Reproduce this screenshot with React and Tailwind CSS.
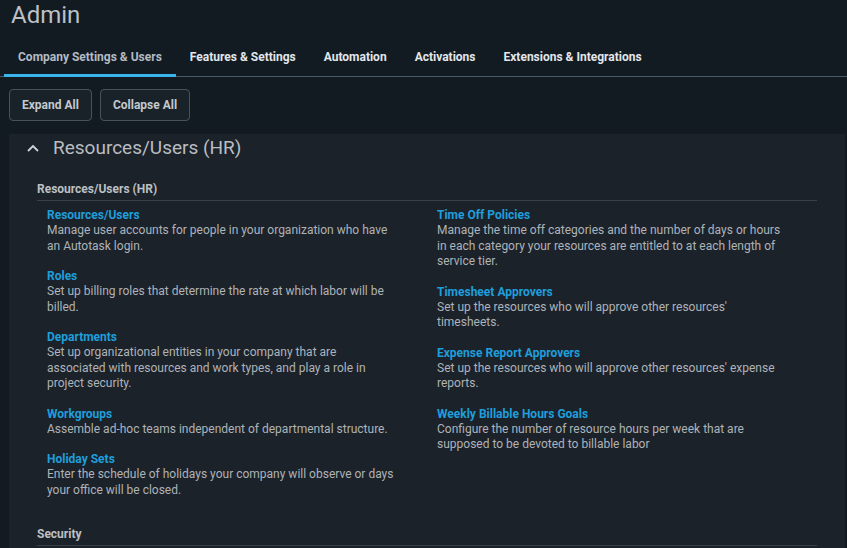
import React from "react";

const left = [
  { t: "Resources/Users", d: "Manage user accounts for people in your organization who have an Autotask login." },
  { t: "Roles", d: "Set up billing roles that determine the rate at which labor will be billed." },
  { t: "Departments", d: "Set up organizational entities in your company that are associated with resources and work types, and play a role in project security." },
  { t: "Workgroups", d: "Assemble ad-hoc teams independent of departmental structure." },
  { t: "Holiday Sets", d: "Enter the schedule of holidays your company will observe or days your office will be closed." },
];
const right = [
  { t: "Time Off Policies", d: "Manage the time off categories and the number of days or hours in each category your resources are entitled to at each length of service tier." },
  { t: "Timesheet Approvers", d: "Set up the resources who will approve other resources' timesheets." },
  { t: "Expense Report Approvers", d: "Set up the resources who will approve other resources' expense reports." },
  { t: "Weekly Billable Hours Goals", d: "Configure the number of resource hours per week that are supposed to be devoted to billable labor" },
];

function Item({ t, d }) {
  return (
    <div className="mb-[14px] w-[350px]">
      <div className="text-[12px] leading-[16px] font-bold text-[#1f9edb]">{t}</div>
      <div className="text-[12px] leading-[15.5px] text-[#aeb3b8]">{d}</div>
    </div>
  );
}

const tabs = ["Company Settings & Users", "Features & Settings", "Automation", "Activations", "Extensions & Integrations"];

export default function App() {
  return (
    <div
      className="w-[847px] h-[548px] overflow-hidden bg-[#121b22] flex flex-col"
      style={{ fontFamily: "Roboto, 'Liberation Sans', sans-serif" }}
    >
      <div className="h-[30px] pl-[11px] text-[24px] leading-[30px] text-[#bcc1c6]">Admin</div>
      <div className="mt-[15px] flex border-b border-[#4a5b67] pl-[4px]">
        {tabs.map((t, i) => (
          <div
            key={t}
            className={
              "px-[14px] pt-[4px] pb-[9px] text-[12px] leading-[16px] font-bold -mb-px border-b-[3px] " +
              (i === 0 ? "border-[#3bb3ec] text-[#b3bcc4]" : "border-transparent text-[#e2e7ec]")
            }
          >
            {t}
          </div>
        ))}
      </div>
      <div className="mt-[12px] ml-[9px] flex gap-[8px]">
        <button className="h-[32px] px-[12px] rounded-[4px] border border-[#46535d] bg-[#1a2229] text-[12px] font-bold text-[#c3c9ce]">
          Expand All
        </button>
        <button className="h-[32px] px-[12px] rounded-[4px] border border-[#46535d] bg-[#1a2229] text-[12px] font-bold text-[#c3c9ce]">
          Collapse All
        </button>
      </div>
      <div className="mt-[13px] ml-[9px] w-[836px] flex-1 bg-[#1b222a]">
        <div className="h-[28px] flex items-center pl-[18px] gap-[14px]">
          <svg width="12" height="8" viewBox="0 0 12 8" fill="none">
            <path d="M1 7 L6 2 L11 7" stroke="#d0d4d8" strokeWidth="1.8" />
          </svg>
          <span className="text-[19px] leading-[24px] text-[#b9bdc1]">Resources/Users (HR)</span>
        </div>
        <div className="ml-[28px] w-[780px] mt-[19px]">
          <div className="pb-[3px] border-b border-[#39424c] text-[12px] leading-[16px] font-bold text-[#bcc0c4]">
            Resources/Users (HR)
          </div>
          <div className="pl-[10px] pt-[6px] grid grid-cols-[390px_380px]">
            <div>
              {left.map((it) => (
                <Item key={it.t} {...it} />
              ))}
            </div>
            <div>
              {right.map((it) => (
                <Item key={it.t} {...it} />
              ))}
            </div>
          </div>
          <div className="mt-[14px] pb-[3px] border-b border-[#39424c] text-[12px] leading-[16px] font-bold text-[#bcc0c4]">
            Security
          </div>
        </div>
      </div>
    </div>
  );
}
